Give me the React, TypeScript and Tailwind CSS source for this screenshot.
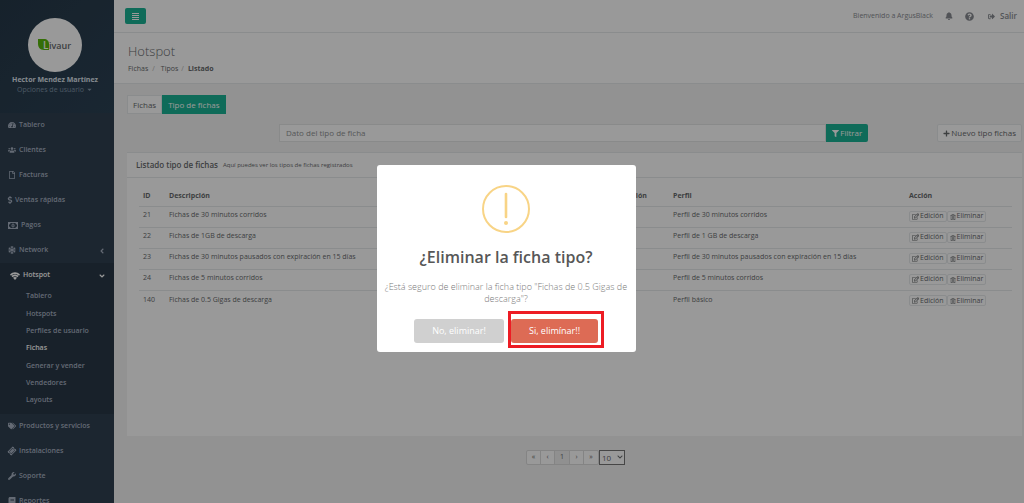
import React from "react";
import {
  FaTachometerAlt, FaUsers, FaRegFile, FaDollarSign, FaSnowflake, FaTags, FaTicketAlt,
  FaWrench, FaBook, FaBell, FaQuestionCircle, FaSignOutAlt, FaFilter, FaPlus, FaRegEdit,
  FaRegTrashAlt, FaAngleLeft, FaAngleDown, FaChevronDown, FaCaretDown,
} from "react-icons/fa";

function MoneyIcon() {
  return (
    <svg viewBox="0 0 20 14" className="h-[7px] w-2.5" fill="currentColor" aria-hidden="true">
      <path fillRule="evenodd" d="M0 0h20v14H0zM5 2a3 3 0 0 1-3 3v4a3 3 0 0 1 3 3h10a3 3 0 0 1 3-3V5a3 3 0 0 1-3-3z" />
      <path fillRule="evenodd" d="M10 3c2 0 3 2 3 4s-1 4-3 4-3-2-3-4 1-4 3-4zM9 5v4h2V5z" />
    </svg>
  );
}

function SignalIcon() {
  return (
    <svg viewBox="0 0 20 16" className="h-2 w-2.5" fill="currentColor" aria-hidden="true">
      <path d="M0 5c6-6 14-6 20 0l-2 2.4C13 3 7 3 2 7.400z" />
      <path d="M3 8.200c4-4 10-4 14 0l-2 2.300c-3-3-7-3-10 0z" />
      <path d="M6 11.500c2-2.200 6-2.200 8 0L10 16z" />
    </svg>
  );
}

function MenuIcon() {
  return (
    <svg viewBox="0 0 7 7" className="size-[7px]" fill="currentColor" shapeRendering="crispEdges" aria-hidden="true">
      <path d="M0 0h7v1H0zM0 2h7v1H0zM0 4h7v1H0zM0 6h7v1H0z" />
    </svg>
  );
}

const mainItems = [
  { label: "Tablero", icon: <FaTachometerAlt /> },
  { label: "Clientes", icon: <FaUsers /> },
  { label: "Facturas", icon: <FaRegFile /> },
  { label: "Ventas rápidas", icon: <FaDollarSign className="-mx-0.5" /> },
  { label: "Pagos", icon: <MoneyIcon /> },
  { label: "Network", icon: <FaSnowflake />, more: true },
];
const subItems = ["Tablero", "Hotspots", "Perfiles de usuario", "Fichas", "Generar y vender", "Vendedores", "Layouts"];
const lowerItems = [
  { label: "Productos y servicios", icon: <FaTags /> },
  { label: "Instalaciones", icon: <FaTicketAlt className="-rotate-45" /> },
  { label: "Soporte", icon: <FaWrench /> },
  { label: "Reportes", icon: <FaBook /> },
];
const rows = [
  ["21", "Fichas de 30 minutos corridos", "Perfil de 30 minutos corridos"],
  ["22", "Fichas de 1GB de descarga", "Perfil de 1 GB de descarga"],
  ["23", "Fichas de 30 minutos pausados con expiración en 15 días", "Perfil de 30 minutos pausados con expiración en 15 días"],
  ["24", "Fichas de 5 minutos corridos", "Perfil de 5 minutos corridos"],
  ["140", "Fichas de 0.5 Gigas de descarga", "Perfil básico"],
];

type Item = { label: string; icon: React.ReactNode; more?: boolean };

function NavItem({ label, icon, more }: Item) {
  return (
    <li>
      <a href="#" className="flex h-[25px] items-center gap-[3px] pr-2 pl-2">
        <span className="flex pb-px text-[8px]">{icon}</span>
        <span className="grow">{label}</span>
        {more && <FaAngleLeft className="text-[8px]" />}
      </a>
    </li>
  );
}

function Sidebar() {
  return (
    <nav className="w-[114px] shrink-0 overflow-hidden bg-[#2f4050] text-[7px] font-semibold text-[#a7b1c2]">
      <div className="flex h-[113px] flex-col items-center bg-linear-to-br from-[#263949] to-[#2b4154] pt-[18px] pr-1">
        <div className="flex size-[54px] items-center justify-center rounded-full bg-white">
          <svg viewBox="0 0 36 14" className="h-3.5 w-9" role="img" aria-label="Livaur">
            <path d="M1 1h6c3 0 5 2 5 5v6H7c-4 0-6-3-6-6z" fill="#59b80d" />
            <text x="6" y="11" fontSize="10" fontFamily="Open Sans, sans-serif" fill="#ffffff">L</text>
            <text x="12" y="11" fontSize="9" fontFamily="Open Sans, sans-serif" fill="#676a6c">ivaur</text>
          </svg>
        </div>
        <strong className="mt-0.5 leading-[11px] font-bold text-[#dfe4ed]">Hector Mendez Martínez</strong>
        <button className="flex items-center gap-0.5 leading-[9px] font-normal text-[#8095a8]">
          Opciones de usuario <FaCaretDown />
        </button>
      </div>
      <ul>{mainItems.map((item) => <NavItem key={item.label} {...item} />)}</ul>
      <div className="border-l-2 border-[#293846] bg-[#293846] pb-[5px]">
        <a href="#" className="flex h-[25px] items-center gap-[3px] pr-2 pl-2 text-white">
          <SignalIcon />
          <span className="grow">Hotspot</span>
          <FaAngleDown className="text-[8px]" />
        </a>
        <ul className="flex h-[121px] flex-col justify-between">
          {subItems.map((label) => (
            <li key={label}>
              <a href="#" className={label === "Fichas" ? "flex h-[17px] items-center pl-6 text-white" : "flex h-[17px] items-center pl-6"}>{label}</a>
            </li>
          ))}
        </ul>
      </div>
      <ul>{lowerItems.map((item) => <NavItem key={item.label} {...item} />)}</ul>
    </nav>
  );
}

function Header() {
  return (
    <>
      <header className="flex h-8 items-center gap-3 bg-white pr-[7px] pl-[11px] text-[7px] text-[#888b91]">
        <button aria-label="Menú" className="flex h-4 w-[21px] items-center justify-center rounded-xs bg-[#1ab394] text-white">
          <MenuIcon />
        </button>
        <span className="ml-auto">Bienvenido a ArgusBlack</span>
        <button aria-label="Notificaciones"><FaBell className="text-[8px]" /></button>
        <button aria-label="Ayuda"><FaQuestionCircle className="text-[9px]" /></button>
        <a href="#" className="ml-0.5 flex items-center gap-[5px] text-[8px] font-semibold"><FaSignOutAlt className="text-[7px]" />Salir</a>
      </header>
      <div className="h-[52px] border-y border-[#e7eaec] bg-white pt-2.5 pl-3.5">
        <h1 className="text-[13px] leading-4 font-light">Hotspot</h1>
        <nav aria-label="Ruta" className="mt-1 flex text-[7px] leading-3">
          <a href="#">Fichas</a><span className="mr-1.5 ml-1 text-[#b0b0b0]">/</span>
          <a href="#">Tipos</a><span className="mr-1 ml-[3px] text-[#b0b0b0]">/</span>
          <strong>Listado</strong>
        </nav>
      </div>
    </>
  );
}

function Listing() {
  const small = "inline-flex h-[11px] items-center gap-px rounded-xs border border-[#e7eaec] px-0.5 text-[7px]";
  const line = "border-t border-[#e7eaec] px-1";
  const cell = "border-t border-[#e7eaec] px-1 pb-0.5";
  return (
    <section className="mt-2.5 mr-0.5 h-[284px] border-t border-[#e7eaec] bg-white">
      <div className="flex h-[25px] items-center gap-[5px] border-b border-[#e7eaec] pl-[9px]">
        <h2 className="text-[8px] font-semibold">Listado tipo de fichas</h2>
        <span className="text-[6px]">Aquí puedes ver los tipos de fichas registrados</span>
      </div>
      <div className="pt-2 pr-2.5 pl-3">
        <table className="w-full table-fixed border-collapse text-left text-[7px]">
          <colgroup>
            <col className="w-[26px]" /><col /><col className="w-[58px]" /><col className="w-[236px]" /><col className="w-[107px]" />
          </colgroup>
          <thead>
            <tr className="h-5 font-bold">
              <th className="px-1">ID</th><th className="px-1">Descripción</th><th className="px-1">Duración</th><th className="px-1">Perfil</th><th className="px-1">Acción</th>
            </tr>
          </thead>
          <tbody>
            {rows.map(([id, description, profile]) => (
              <tr key={id} className="h-[21px]">
                <td className={cell}>{id}</td>
                <td className={cell}>{description}</td>
                <td className={cell} />
                <td className={cell}>{profile}</td>
                <td className={line}>
                  <div className="flex">
                    <button className={small}><FaRegEdit />Edición</button>
                    <button className={small}><FaRegTrashAlt className="text-[6px]" />Eliminar</button>
                  </div>
                </td>
              </tr>
            ))}
          </tbody>
        </table>
      </div>
    </section>
  );
}

function Pager() {
  const page = "w-3.5 border-r border-[#dddddd] last:border-r-0";
  return (
    <div className="mt-3.5 flex items-center justify-center text-[7px]">
      <div className="flex h-[15px] rounded-xs border border-[#dddddd] bg-white">
        <button className={page}>«</button>
        <button className={page}>‹</button>
        <button className="w-[15px] border-r border-[#dddddd] bg-[#f0f0f0]">1</button>
        <button className={page}>›</button>
        <button className={page}>»</button>
      </div>
      <div className="relative flex">
        <select aria-label="Filas por página" className="h-[15px] w-[26px] appearance-none border border-[#767676] bg-white pl-0.5 text-[8px] leading-3">
          <option>10</option><option>25</option>
        </select>
        <FaChevronDown className="pointer-events-none absolute top-1 right-0.5 text-[6px]" />
      </div>
    </div>
  );
}

function Dialog() {
  return (
    <div className="fixed inset-0 flex items-center justify-center bg-black/40 pt-3.5 pr-3">
      <div role="dialog" aria-modal="true" aria-labelledby="dialog-title" className="flex w-[259px] flex-col items-center rounded-[3px] bg-white px-2 pt-5 pb-1 text-center">
        <svg viewBox="0 0 48 48" className="size-12" fill="none" stroke="#f8d486" strokeWidth="2">
          <circle cx="24" cy="24" r="23" />
          <path d="M24 9v23" strokeWidth="2.6" strokeLinecap="round" />
          <circle cx="24" cy="38" r="2" fill="#f8d486" stroke="none" />
        </svg>
        <h2 id="dialog-title" className="mt-3 text-[16px] leading-6 font-semibold text-[#575757]">¿Eliminar la ficha tipo?</h2>
        <p className="mt-3 text-[9px] leading-3 font-light text-[#797979]">¿Está seguro de eliminar la ficha tipo "Fichas de 0.5 Gigas de descarga"?</p>
        <div className="mt-1.5 ml-1.5 flex items-end gap-1">
          <button className="mb-[5px] h-6 w-[90px] rounded-[3px] bg-[#d0d0d0] text-[9px] text-white">No, eliminar!</button>
          <div className="border-[3px] border-[#ed1c24] pt-[5px] pr-[3px] pb-0.5">
            <button className="block h-6 w-[87px] rounded-[3px] bg-[#dd6b55] text-[9px] text-white">Si, elimínar!!</button>
          </div>
        </div>
      </div>
    </div>
  );
}

export default function App() {
  return (
    <div className="flex h-screen overflow-hidden bg-[#f3f3f4] font-['Open_Sans','Noto_Sans',sans-serif] text-[#676a6c]">
      <Sidebar />
      <main className="min-w-0 grow">
        <Header />
        <div className="pt-[11px] pl-[13px]">
          <div className="flex h-[19px] text-[8px]">
            <button className="border border-[#e7eaec] bg-white px-[5px]">Fichas</button>
            <button className="bg-[#1ab394] px-1.5 text-white">Tipo de fichas</button>
          </div>
          <form className="mt-2.5 flex h-[18px] items-stretch pl-[152px] text-[8px]" onSubmit={(e) => e.preventDefault()}>
            <input aria-label="Dato del tipo de ficha" placeholder="Dato del tipo de ficha" className="min-w-0 grow border border-[#e5e6e7] bg-white px-1.5 text-[8px] placeholder:text-[#909294]" />
            <button className="flex items-center gap-px rounded-r-xs bg-[#1ab394] px-1.5 text-white"><FaFilter className="text-[7px]" />Filtrar</button>
            <button type="button" className="mr-0.5 ml-[69px] flex items-center gap-px rounded-xs border border-[#e7eaec] bg-white px-[5px]"><FaPlus className="text-[7px]" />Nuevo tipo fichas</button>
          </form>
          <Listing />
          <Pager />
        </div>
      </main>
      <Dialog />
    </div>
  );
}
